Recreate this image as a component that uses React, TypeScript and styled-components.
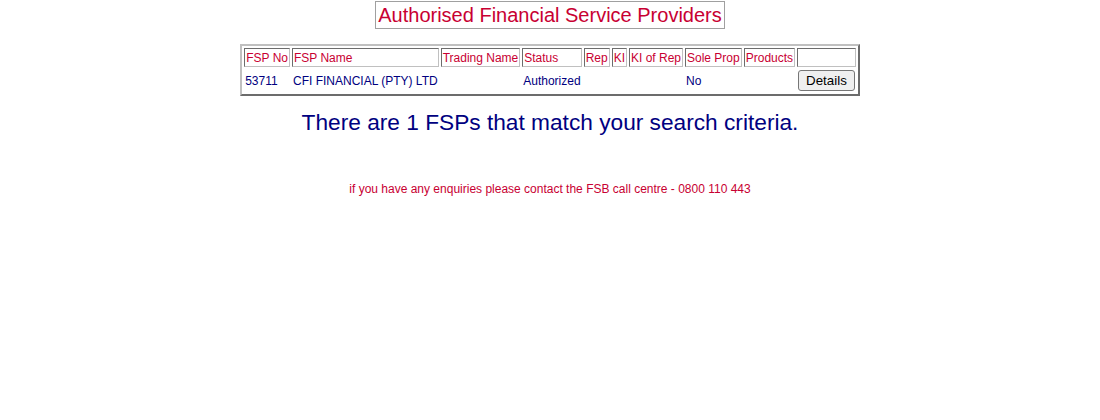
import React from "react";
import styled, { createGlobalStyle } from "styled-components";

const Global = createGlobalStyle`
  html, body { margin: 0; padding: 0; background: #ffffff; }
  body { font-family: "Liberation Sans", Arial, sans-serif; }
`;

const Page = styled.div`
  display: flex;
  flex-direction: column;
  align-items: center;
  padding-top: 1px;
`;

const Title = styled.h1`
  margin: 0;
  padding: 1px 2px 1px 2px;
  border: 1px solid #a0a0a0;
  font-size: 20px;
  font-weight: normal;
  line-height: 24px;
  color: #c80032;
`;

const Results = styled.table`
  margin-top: 15px;
  border: 2px outset #c0c0c0;
  border-spacing: 2px;
  font-size: 12px;
`;

const HeadCell = styled.th`
  border: 1px inset #c0c0c0;
  padding: 1px 1px;
  height: 15px;
  font-weight: normal;
  text-align: left;
  color: #c80032;
  white-space: nowrap;
`;

const Cell = styled.td<{ $center?: boolean }>`
  padding: 1px 1px;
  color: #000080;
  white-space: nowrap;
  text-align: ${(p) => (p.$center ? "center" : "left")};
  height: 20px;
`;

const DetailsButton = styled.button`
  display: block;
  font-family: "Liberation Sans", Arial, sans-serif;
  font-size: 13.33px;
  padding: 0 7px;
  height: 21px;
  border: 1px solid #767676;
  border-radius: 3px;
  background: #efefef;
  color: #000;
`;

const Summary = styled.p`
  margin: 13px 0 0;
  font-size: 22.7px;
  line-height: 27px;
  color: #000080;
`;

const Enquiry = styled.p`
  margin: 46px 0 0;
  font-size: 12px;
  line-height: 14px;
  color: #c80032;
`;

const headers = [
  "FSP No",
  "FSP Name",
  "Trading Name",
  "Status",
  "Rep",
  "KI",
  "KI of Rep",
  "Sole Prop",
  "Products",
  "",
];

export default function App() {
  return (
    <>
      <Global />
      <Page>
        <Title>Authorised Financial Service Providers</Title>
        <Results>
          <thead>
            <tr>
              {headers.map((h, i) => (
                <HeadCell key={i}>{h}</HeadCell>
              ))}
            </tr>
          </thead>
          <tbody>
            <tr>
              <Cell>53711</Cell>
              <Cell>CFI FINANCIAL (PTY) LTD</Cell>
              <Cell></Cell>
              <Cell>Authorized</Cell>
              <Cell></Cell>
              <Cell></Cell>
              <Cell></Cell>
              <Cell>No</Cell>
              <Cell></Cell>
              <Cell $center>
                <DetailsButton>Details</DetailsButton>
              </Cell>
            </tr>
          </tbody>
        </Results>
        <Summary>There are 1 FSPs that match your search criteria.</Summary>
        <Enquiry>if you have any enquiries please contact the FSB call centre - 0800 110 443</Enquiry>
      </Page>
    </>
  );
}
